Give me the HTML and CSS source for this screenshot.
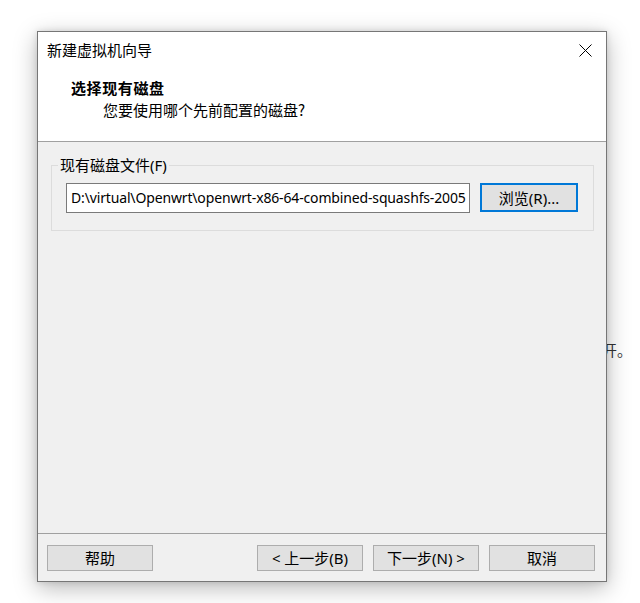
FILE: index.html
```html
<!DOCTYPE html>
<html lang="zh-CN">
<head>
<meta charset="utf-8">
<title>新建虚拟机向导</title>
<link rel="stylesheet" href="styles.css">
</head>
<body>
<div class="backdrop-text">开。</div>
<div class="window">
  <div class="header">
    <div class="titlebar">
      <span class="title">新建虚拟机向导</span>
      <span class="close"><svg width="13" height="13" viewBox="0 0 13 13"><path d="M0.5 0.5L12.5 12.5M12.5 0.5L0.5 12.5" stroke="#000" stroke-width="1" fill="none"/></svg></span>
    </div>
    <div class="heading">选择现有磁盘</div>
    <div class="subheading">您要使用哪个先前配置的磁盘?</div>
  </div>
  <div class="content">
    <fieldset class="group">
      <legend>现有磁盘文件(F)</legend>
      <div class="file-row">
        <div class="textbox">D:\virtual\Openwrt\openwrt-x86-64-combined-squashfs-2005</div>
        <button class="btn btn-focus">浏览(R)...</button>
      </div>
    </fieldset>
  </div>
  <div class="footer">
    <button class="btn">帮助</button>
    <div class="spacer"></div>
    <button class="btn">&lt; 上一步(B)</button>
    <button class="btn">下一步(N) &gt;</button>
    <button class="btn">取消</button>
  </div>
</div>
</body>
</html>
```

FILE: styles.css
```css
* { box-sizing: border-box; }

html, body {
  margin: 0;
  padding: 0;
  background: #ffffff;
}

body {
  position: relative;
  width: 640px;
  height: 603px;
  overflow: hidden;
  font-family: "Noto Sans", "Noto Sans CJK SC", sans-serif;
  font-size: 15px;
  color: #000;
}

.backdrop-text {
  position: absolute;
  left: 602px;
  top: 340px;
  font-family: "Noto Sans CJK SC", sans-serif;
  font-size: 15px;
  line-height: 20px;
  color: #333;
}

.window {
  position: relative;
  margin: 31px 0 0 37px;
  width: 570px;
  height: 551px;
  border: 1px solid #767676;
  background: #f0f0f0;
  display: flex;
  flex-direction: column;
  box-shadow: 0 6px 22px rgba(0, 0, 0, 0.28), 0 0 6px rgba(0, 0, 0, 0.12);
}

.header {
  height: 110px;
  background: #ffffff;
  border-bottom: 1px solid #a0a0a0;
}

.titlebar {
  height: 36px;
  display: flex;
  align-items: center;
  justify-content: space-between;
  padding: 0 14px 0 9px;
}

.title {
  font-family: "Noto Sans CJK SC", sans-serif;
  font-size: 15px;
  line-height: 20px;
}

.close {
  display: flex;
  width: 13px;
  height: 13px;
}

.heading {
  margin-top: 10px;
  padding-left: 33px;
  font-family: "Noto Sans CJK SC", sans-serif;
  font-weight: bold;
  font-size: 15px;
  line-height: 20px;
  letter-spacing: 0.6px;
}

.subheading {
  margin-top: 2px;
  padding-left: 65px;
  font-family: "Noto Sans CJK SC", sans-serif;
  font-size: 15px;
  line-height: 20px;
}

.content {
  flex: 1;
}

.group {
  margin: 14px 12px 0 13px;
  padding: 9px 14px 17px 14px;
  border: 1px solid #dcdcdc;
  min-width: 0;
}

.group legend {
  margin-left: -8px;
  padding: 0 2px;
  font-size: 15px;
  line-height: 18px;
}

.file-row {
  display: flex;
  gap: 10px;
  align-items: flex-start;
}

.textbox {
  width: 404px;
  height: 30px;
  border: 1px solid #7a7a7a;
  background: #ffffff;
  padding: 0 1px 0 4px;
  font-size: 14px;
  letter-spacing: -0.15px;
  line-height: 28px;
  white-space: nowrap;
  overflow: hidden;
}

.btn {
  width: 106px;
  height: 26px;
  margin: 0;
  padding: 0;
  background: #e1e1e1;
  border: 1px solid #adadad;
  font-family: "Noto Sans", "Noto Sans CJK SC", sans-serif;
  font-size: 15px;
  line-height: 22px;
  color: #000;
}

.btn-focus {
  width: 98px;
  height: 29px;
  border: 2px solid #0078d7;
}

.footer {
  height: 48px;
  border-top: 1px solid #a0a0a0;
  display: flex;
  align-items: flex-start;
  gap: 10px;
  padding: 11px 11px 0 9px;
}

.spacer {
  flex: 1;
}
```
